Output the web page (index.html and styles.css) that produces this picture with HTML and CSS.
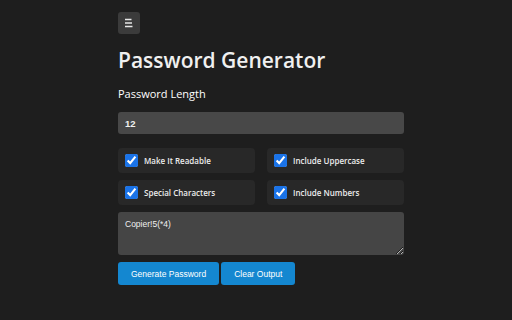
FILE: index.html
```html
<!DOCTYPE html>
<html lang="en">
<head>
    <meta charset="UTF-8">
    <meta name="viewport" content="width=device-width, initial-scale=1.0">
    <title>Password Generator</title>
    <link rel="stylesheet" href="styles.css">
</head>
<body>
    <div class="container">
        <button class="menu-btn" aria-label="Menu">
            <svg width="12" height="12" viewBox="0 0 12 12">
                <path d="M2 2.5h6.5M2 6h7M2 9.5h7.5" stroke="#e8e8e8" stroke-width="1.6" fill="none"/>
            </svg>
        </button>

        <h1>Password Generator</h1>

        <label class="field-label" for="length">Password Length</label>
        <input type="text" id="length" class="length-input" value="12">

        <div class="options">
            <label class="option"><input type="checkbox" checked> Make It Readable</label>
            <label class="option"><input type="checkbox" checked> Include Uppercase</label>
            <label class="option"><input type="checkbox" checked> Special Characters</label>
            <label class="option"><input type="checkbox" checked> Include Numbers</label>
        </div>

        <textarea class="output">Copier!5(*4)</textarea>

        <div class="actions">
            <button class="btn">Generate Password</button>
            <button class="btn">Clear Output</button>
        </div>
    </div>
</body>
</html>
```

FILE: styles.css
```css
* {
    margin: 0;
    padding: 0;
    box-sizing: border-box;
}

body {
    font-family: 'Open Sans', sans-serif;
    background: #1e1e1e;
    color: #f0f0f0;
    min-height: 100vh;
}

.container {
    width: 296px;
    margin: 0 auto;
    padding: 12px 0 0 10px;
}

.menu-btn {
    width: 22px;
    height: 22px;
    border: none;
    border-radius: 3px;
    background: #3b3b3b;
    display: flex;
    align-items: center;
    justify-content: center;
}

h1 {
    font-size: 21px;
    font-weight: 600;
    margin-top: 11px;
    line-height: 30px;
}

.field-label {
    display: block;
    font-size: 11px;
    font-weight: normal;
    color: #ffffff;
    margin-top: 11px;
    line-height: 16px;
}

.length-input {
    display: block;
    width: 100%;
    height: 22px;
    margin-top: 10px;
    border: none;
    border-radius: 3px;
    background: #484848;
    color: #f0f0f0;
    font-family: 'Liberation Sans', Arial, sans-serif;
    font-size: 9.5px;
    font-weight: bold;
    padding: 0 7px;
    outline: none;
}

.options {
    display: grid;
    grid-template-columns: 1fr 1fr;
    column-gap: 12px;
    row-gap: 7px;
    margin-top: 14px;
}

.option {
    display: flex;
    align-items: center;
    gap: 6px;
    height: 25px;
    padding: 0 7px;
    border-radius: 4px;
    background: #282828;
    font-size: 8px;
    font-weight: 600;
    color: #ececec;
}

.option input {
    width: 13px;
    height: 13px;
    margin: 0;
    accent-color: #1a73e8;
}

.output {
    display: block;
    width: 100%;
    height: 43px;
    margin-top: 7px;
    border: none;
    border-radius: 3px;
    background: #454545;
    color: #f0f0f0;
    font-family: 'Liberation Sans', Arial, sans-serif;
    font-size: 8.5px;
    padding: 7px;
    outline: none;
}

.actions {
    display: flex;
    gap: 2px;
    margin-top: 7px;
}

.btn {
    height: 23px;
    padding: 0 13px;
    border: none;
    border-radius: 3px;
    background: #1487d0;
    color: #ffffff;
    font-family: 'Liberation Sans', Arial, sans-serif;
    font-size: 8.5px;
    cursor: pointer;
}
```
